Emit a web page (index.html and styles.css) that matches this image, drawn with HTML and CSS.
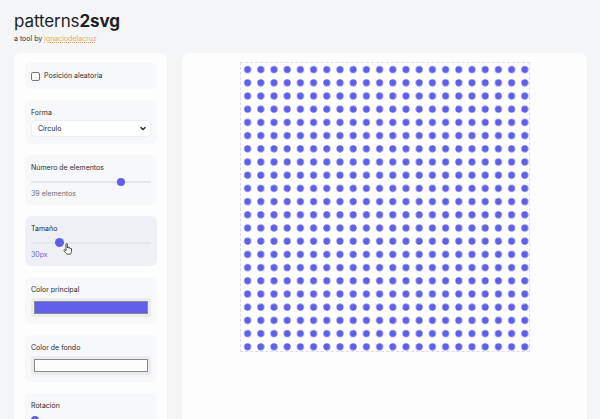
FILE: index.html
```html
<!DOCTYPE html>
<html lang="es">
<head>
<meta charset="utf-8">
<title>patterns2svg</title>
<link rel="stylesheet" href="styles.css">
</head>
<body>
<header class="header">
  <h1 class="title">patterns<b>2svg</b></h1>
  <p class="subtitle">a tool by <a class="author" href="#">ignaciodelacruz</a></p>
</header>
<main class="layout">
  <aside class="controls">
    <section class="group group-check">
      <span class="checkbox"></span>
      <span class="label">Posición aleatoria</span>
    </section>
    <section class="group">
      <div class="label">Forma</div>
      <div class="select">
        <span>Círculo</span>
        <svg class="chevron" width="6" height="5" viewBox="0 0 6 5"><path d="M0.6 1.2 L3 3.6 L5.4 1.2" fill="none" stroke="#222" stroke-width="1.4"/></svg>
      </div>
    </section>
    <section class="group">
      <div class="label">Número de elementos</div>
      <div class="slider"><div class="track"><span class="thumb" style="left:75%"></span></div></div>
      <div class="value">39 elementos</div>
    </section>
    <section class="group group-active">
      <div class="label">Tamaño</div>
      <div class="slider"><div class="track"><span class="thumb thumb-hover" style="left:24%"></span>
        <svg class="cursor" width="10" height="12" viewBox="0 0 10 12"><path d="M3 1.2 C3 0.4 4.4 0.4 4.4 1.2 L4.4 5 L4.6 4.6 C4.6 3.9 5.9 3.9 5.9 4.7 L5.9 5.2 C6 4.6 7.2 4.6 7.2 5.3 L7.2 5.8 C7.3 5.2 8.5 5.2 8.5 6 L8.5 8.4 C8.5 10 7.6 11.2 6 11.2 L5 11.2 C3.9 11.2 3.3 10.6 2.6 9.8 L1 7.6 C0.6 7 1.4 6.3 2 6.8 L3 7.8 Z" fill="#fff" stroke="#222" stroke-width="0.8" stroke-linejoin="round"/></svg>
      </div></div>
      <div class="value value-accent">30px</div>
    </section>
    <section class="group">
      <div class="label">Color principal</div>
      <div class="color-btn"><span class="swatch swatch-main"></span></div>
    </section>
    <section class="group">
      <div class="label">Color de fondo</div>
      <div class="color-btn"><span class="swatch swatch-bg"></span></div>
    </section>
    <section class="group">
      <div class="label">Rotación</div>
      <div class="slider"><div class="track"><span class="thumb" style="left:3%"></span></div></div>
    </section>
  </aside>
  <section class="preview">
    <div class="canvas">
      <svg width="288" height="288" viewBox="0 0 288 288">
        <defs>
          <pattern id="dots" width="13.2" height="13.2" patternUnits="userSpaceOnUse">
            <circle cx="6.6" cy="6.6" r="3.5" fill="#5f5fe9"/>
          </pattern>
        </defs>
        <rect width="288" height="288" fill="#ffffff"/>
        <rect width="288" height="288" fill="url(#dots)"/>
      </svg>
    </div>
  </section>
</main>
</body>
</html>
```
FILE: styles.css
```css
* { box-sizing: border-box; }
html, body { height: 100%; }
body {
  margin: 0;
  padding: 11px 13px 0 14px;
  background: #f4f5f7;
  font-family: Inter, "Liberation Sans", sans-serif;
  color: #222;
  overflow: hidden;
  display: flex;
  flex-direction: column;
}
.header { height: 42px; flex: none; }
.title {
  margin: 0;
  font-size: 17px;
  line-height: 21px;
  font-weight: 400;
  color: #1d1f24;
  letter-spacing: -0.1px;
}
.title b { font-weight: 700; }
.subtitle {
  margin: 2px 0 0;
  font-size: 7px;
  line-height: 10px;
  color: #333;
}
.author {
  color: #f2a468;
  text-decoration: underline dotted #f2a468;
}
.layout {
  display: flex;
  gap: 15px;
  flex: 1;
  min-height: 0;
}
.controls {
  width: 153px;
  flex: none;
  background: #fdfdfe;
  border-radius: 7px 7px 0 0;
  padding: 9px 10px 0 11px;
  display: flex;
  flex-direction: column;
  gap: 11px;
  overflow: hidden;
}
.group {
  background: #f7f8fa;
  border-radius: 6px;
  padding: 8px 6px 7px;
  flex: none;
}
.group-active { background: #eef0f5; }
.group-check {
  height: 27px;
  display: flex;
  align-items: center;
  gap: 4px;
  padding: 0 6px;
}
.checkbox {
  width: 9px;
  height: 9px;
  border: 1px solid #767676;
  border-radius: 2px;
  background: #fff;
  margin-top: 2px;
}
.label {
  font-size: 7px;
  line-height: 9px;
  color: #2b2d31;
}
.group > .label { margin-bottom: 3px; }
.group-check .label { margin: 0; }
.select {
  height: 17px;
  background: #fff;
  border: 1px solid #eceef1;
  border-radius: 4px;
  display: flex;
  align-items: center;
  justify-content: space-between;
  padding: 0 4px 0 6px;
  font-size: 7px;
  color: #222;
}
.chevron { display: block; }
.slider {
  height: 13px;
  display: flex;
  align-items: center;
}
.track {
  position: relative;
  width: 100%;
  height: 2px;
  background: #e4e6ea;
  border-radius: 1px;
}
.thumb {
  position: absolute;
  top: 50%;
  width: 8px;
  height: 8px;
  margin: -4px 0 0 -4px;
  background: #5f5fe9;
  border-radius: 50%;
}
.thumb-hover {
  width: 9px;
  height: 9px;
  margin: -4.5px 0 0 -4.5px;
}
.cursor {
  position: absolute;
  left: 26.5%;
  top: 1px;
}
.value {
  margin-top: 1px;
  font-size: 7px;
  line-height: 9px;
  color: #6b6f78;
}
.value-accent { color: #6a66e6; }
.group .color-btn { margin-top: 4px; }
.color-btn {
  height: 19px;
  background: #ececef;
  border-radius: 3px;
  padding: 3px;
  display: flex;
}
.swatch {
  flex: 1;
  border: 1px solid #8b8b93;
}
.swatch-main { background: #5f5fe9; }
.swatch-bg { background: #fdfdfd; border-color: #8a8a8a; border-width: 1.2px; }
.preview {
  flex: 1;
  background: #fdfdfe;
  border-radius: 8px 8px 0 0;
  padding-top: 10px;
  display: flex;
  justify-content: center;
  align-items: flex-start;
}
.canvas {
  width: 288px;
  height: 288px;
  outline: 1px dashed #dcdde2;
  background: #fff;
}
.canvas svg { display: block; }
```
